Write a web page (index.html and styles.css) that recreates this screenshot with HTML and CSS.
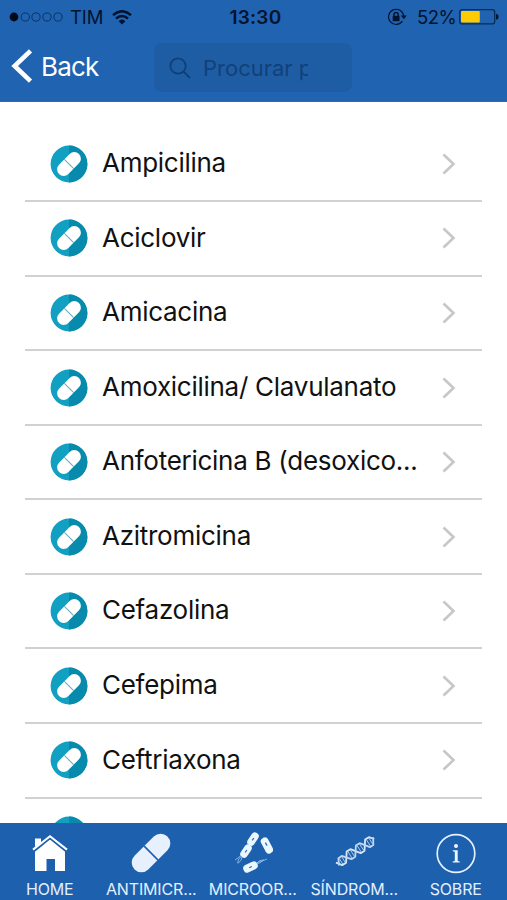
FILE: index.html
```html
<!DOCTYPE html>
<html lang="pt">
<head>
<meta charset="utf-8">
<title>Antimicrobianos</title>
<link rel="stylesheet" href="styles.css">
</head>
<body>
<svg class="defs" aria-hidden="true">
  <symbol id="pill" viewBox="0 0 38 38">
    <circle cx="19" cy="19" r="18.4" fill="#12a0c2"/>
    <path d="M19 .6a18.4 18.4 0 0 1 0 36.8z" fill="#078aac"/>
    <g transform="rotate(-45 19 19)"><rect x="4.9" y="12.4" width="28.2" height="13.2" rx="6.6" fill="#fff"/><path d="M19 12.4v13.2" stroke="#69a9b9" stroke-width="1"/></g>
  </symbol>
  <symbol id="chevron" viewBox="0 0 14 22"><path d="M1.5 1.5L11.5 11L1.5 20.5" fill="none" stroke="#c7c7cb" stroke-width="2.6"/></symbol>
</svg>
<div class="phone">
  <header class="top">
    <div class="status">
      <div class="carrier">
        <svg width="55" height="12" viewBox="0 0 55 12" fill="none" stroke="#0a3468" stroke-width="1"><circle cx="5" cy="6" r="4.4" fill="#000a1c" stroke="none"/><circle cx="16.3" cy="6" r="4.1"/><circle cx="27" cy="6" r="4.1"/><circle cx="38" cy="6" r="4.1"/><circle cx="49" cy="6" r="4.1"/></svg>
        <span class="tim">TIM</span>
        <svg width="20" height="15" viewBox="0 0 20 15" fill="none" stroke="#00122d" stroke-width="2.4"><path d="M1 5.2Q10-2.8 19 5.2M4 8.5Q10 3.3 16 8.5"/><path d="M6.6 11.2Q10 8 13.4 11.2L10 14.6z" fill="#00122d" stroke="none"/></svg>
      </div>
      <span class="clock">13:30</span>
      <div class="power">
        <svg class="lock" width="20" height="18" viewBox="0 0 20 18" fill="none" stroke="#00132f" stroke-width="1.2"><path d="M15.4 13.2A7.6 7.6 0 1 1 16.7 8"/><path d="M13.8 7.6h6l-3 3.7z" fill="#00132f" stroke="none"/><rect x="5.7" y="7.8" width="6.8" height="5.4" fill="#00132f" stroke="none"/><path d="M7 8V6.6a2.1 2.1 0 0 1 4.2 0V8" stroke-width="1.4"/></svg>
        <span class="pct">52%</span>
        <svg width="40" height="16" viewBox="0 0 40 16"><rect x=".7" y=".7" width="35" height="14.2" rx="2.5" fill="none" stroke="#0a2c58" stroke-width="1.3"/><rect x="2" y="2" width="18.8" height="11.6" rx="1" fill="#fdcb05"/><path d="M37 5q2.5 0 2.5 2.8t-2.5 2.8z" fill="#00132f"/></svg>
      </div>
    </div>
    <div class="nav">
      <div class="back"><svg width="22" height="34" viewBox="0 0 22 34"><path d="M19.5 1.8L3.6 17L19.5 32.2" fill="none" stroke="#fff" stroke-width="4.6"/></svg><span>Back</span></div>
      <div class="search"><svg width="22" height="22" viewBox="0 0 22 22" fill="none" stroke="#0e4077" stroke-width="1.8"><circle cx="9" cy="9" r="7.7"/><path d="M14.5 14.5L21 21"/></svg><span>Procurar por</span></div>
    </div>
  </header>
  <main class="list">
    <div class="row"><svg class="pill"><use href="#pill"/></svg><span class="name">Ampicilina</span><svg class="chev"><use href="#chevron"/></svg></div>
    <div class="row"><svg class="pill"><use href="#pill"/></svg><span class="name">Aciclovir</span><svg class="chev"><use href="#chevron"/></svg></div>
    <div class="row"><svg class="pill"><use href="#pill"/></svg><span class="name">Amicacina</span><svg class="chev"><use href="#chevron"/></svg></div>
    <div class="row"><svg class="pill"><use href="#pill"/></svg><span class="name">Amoxicilina/ Clavulanato</span><svg class="chev"><use href="#chevron"/></svg></div>
    <div class="row"><svg class="pill"><use href="#pill"/></svg><span class="name">Anfotericina B (desoxico...</span><svg class="chev"><use href="#chevron"/></svg></div>
    <div class="row"><svg class="pill"><use href="#pill"/></svg><span class="name">Azitromicina</span><svg class="chev"><use href="#chevron"/></svg></div>
    <div class="row"><svg class="pill"><use href="#pill"/></svg><span class="name">Cefazolina</span><svg class="chev"><use href="#chevron"/></svg></div>
    <div class="row"><svg class="pill"><use href="#pill"/></svg><span class="name">Cefepima</span><svg class="chev"><use href="#chevron"/></svg></div>
    <div class="row"><svg class="pill"><use href="#pill"/></svg><span class="name">Ceftriaxona</span><svg class="chev"><use href="#chevron"/></svg></div>
    <div class="row"><svg class="pill"><use href="#pill"/></svg></div>
  </main>
  <nav class="tabs">
    <div class="tab"><svg width="40" height="42" viewBox="0 0 40 42"><path d="M5 17.5L20 5.5L35 17.5V39H25V27H16.5V39H5z" fill="#fff"/><path d="M5 15V6.5H11V11z" fill="#fff"/><path d="M3 19.2L20 5.6L37 19.2" fill="none" stroke="#1d5fac" stroke-width="3.2"/><path d="M3 17.6L20 4.2L37 17.6" fill="none" stroke="#fff" stroke-width="2"/></svg><span class="t1">HOME</span></div>
    <div class="tab"><svg width="42" height="42" viewBox="0 0 42 42"><g transform="rotate(-45 21 21)"><rect x="-2.3" y="11.3" width="46.6" height="19.4" rx="9.7" fill="#e7f0ff"/><path d="M21 11v20" stroke="#1d5fac" stroke-width="1.6"/></g></svg><span class="t2">ANTIMICR...</span></div>
    <div class="tab"><svg width="40" height="42" viewBox="0 0 40 42">
      <g fill="#e9f7ff"><rect x="12.8" y="3.3" width="14.4" height="7.6" rx="3.6" transform="rotate(-56 20 7.1)"/><rect x="5.8" y="15.4" width="14.4" height="7.6" rx="3.6" transform="rotate(-56 13 19.2)"/><rect x="25.4" y="9.6" width="17" height="7.8" rx="3.6" transform="rotate(62 33.9 13.5)"/><rect x="10" y="31" width="15" height="8" rx="3.6" transform="rotate(-26 17.5 35)"/></g>
      <g fill="none" stroke="#2d69ad" stroke-width="1.2"><path d="M19.2 8.4L20.8 6M12.2 20.5L13.8 18M32.4 10.6L34 13.6M16.2 35.8L18.8 34.5"/></g>
      <g fill="none" stroke="#8dbbe6" stroke-width=".9"><path d="M9 24Q5 26 4.5 31M8 23.5Q5 26 2 28M9 25Q9 28 5 31.5M24 32Q28 31 31 27.500M24 30.500Q28 30 34 27M24 31Q26 28 30 28"/></g></svg><span class="t3">MICROOR...</span></div>
    <div class="tab"><svg width="42" height="42" viewBox="0 0 42 42"><g transform="translate(22.8 19) rotate(-33)" fill="none" stroke="#d8e7f8" stroke-width="1.8" stroke-linejoin="round"><path d="M-23-1L-19 4.500H-14.500L-8-4.500H-3.500L3 4.500H7.500L14-4.500H18.500L22 0"/><path d="M-22 3L-18.500-3.500H-14.500L-8 4.500H-3.500L3-4.500H7.500L14 4.500H18L22-2" stroke="#c0d7f0"/><path d="M-18-3V4M-15-3V4M-7-4V4M-4-4V4M4-4V4M7-4V4M15-4V4M18-4V4" stroke-width=".9" stroke="#b0cbea"/></g></svg><span class="t4">SÍNDROM...</span></div>
    <div class="tab"><svg width="42" height="42" viewBox="0 0 42 42"><circle cx="21" cy="21.5" r="18.8" fill="none" stroke="#e4f1ff" stroke-width="1.7"/><circle cx="21" cy="14" r="2" fill="#eef6ff"/><path d="M17.8 18.3h4.9v10.6l2 .6v1h-7v-1l2.1-.6v-9.1l-2-.5z" fill="#eef6ff"/></svg><span class="t5">SOBRE</span></div>
  </nav>
</div>
</body>
</html>
```

FILE: styles.css
```css
* { box-sizing: border-box; }
body { margin: 0; font-family: Inter, "Liberation Sans", sans-serif; background: #fff; }
svg { display: block; flex: none; }
.defs { position: absolute; width: 0; height: 0; }
.phone { width: 507px; height: 900px; display: flex; flex-direction: column; overflow: hidden; }
.top { height: 102px; flex: none; background: #2063b0; border-bottom: 1px solid #38699f; }
.status { height: 34px; display: grid; grid-template-columns: 1fr auto 1fr; align-items: center; padding: 0 8px 0 9px; color: #00132f; }
.carrier, .power { display: flex; align-items: center; }
.tim { font-size: 18.5px; margin-left: 6px; width: 36px; letter-spacing: -.1px; }
.carrier svg:last-child { margin-left: 6px; }
.clock { font-size: 19px; font-weight: 600; letter-spacing: .2px; padding-left: 3px; }
.power { justify-content: flex-end; }
.lock { margin-right: 10px; }
.pct { font-size: 18.5px; letter-spacing: -.5px; width: 38px; margin-right: 4px; }
.nav { display: flex; height: 67px; padding-left: 11px; align-items: center; }
.back { display: flex; align-items: center; width: 143px; height: 49px; color: #fff; font-size: 26px; letter-spacing: -.8px; padding-bottom: 3px; }
.back span { margin-left: 8px; }
.search { display: flex; align-items: center; width: 198px; height: 49px; border-radius: 8px; background: #1e5da4; padding-left: 15px; color: #124179; font-size: 22px; }
.search span { margin-left: 12px; width: 105px; overflow: hidden; white-space: nowrap; }
.list { height: 721px; flex: none; overflow: hidden; padding: 25.6px 25px 0; }
.row { height: 74.55px; display: flex; align-items: center; padding: 0 26px 0 25px; border-bottom: 2px solid #d1d1d3; }
.pill { width: 38px; height: 38px; }
.name { flex: 1; margin: 0 0 1.400px 14px; font-size: 26px; line-height: 36px; letter-spacing: -.27px; color: #111; white-space: nowrap; }
.chev { width: 14px; height: 22px; }
.tabs { flex: 1; display: grid; grid-template-columns: repeat(5, 101.5px); background: #1d60ae; color: #e1efff; }
.tab { display: flex; flex-direction: column; align-items: center; padding-top: 9px; font-size: 16px; line-height: 20px; letter-spacing: -.15px; white-space: nowrap; }
.tab svg { margin-left: -2px; }
.tab span { margin: 5px 2px 0 0; }
```
